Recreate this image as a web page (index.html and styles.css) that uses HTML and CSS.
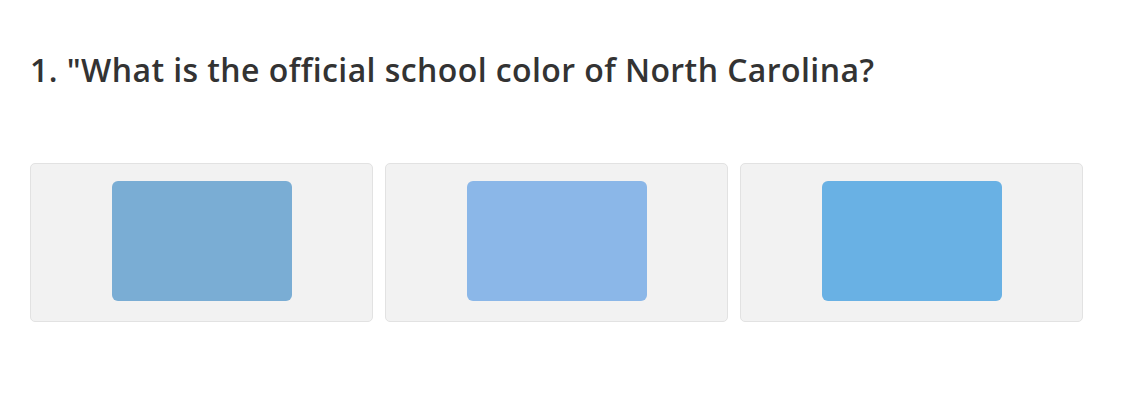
FILE: index.html
```html
<!DOCTYPE html>
<html>
<head>
<meta charset="utf-8">
<link rel="stylesheet" href="styles.css">
</head>
<body>
<div class="quiz">
  <h1 class="question">1. "What is the official school color of North Carolina?</h1>
  <div class="options">
    <div class="option"><div class="swatch swatch-a"></div></div>
    <div class="option"><div class="swatch swatch-b"></div></div>
    <div class="option"><div class="swatch swatch-c"></div></div>
  </div>
</div>
</body>
</html>
```
FILE: styles.css
```css
html, body {
  margin: 0;
  padding: 0;
  background: #ffffff;
}
.quiz {
  padding: 50px 0 0 30px;
  font-family: "Open Sans", "Liberation Sans", sans-serif;
}
.question {
  margin: 0;
  font-size: 32px;
  font-weight: 600;
  color: #333333;
  line-height: 40px;
  letter-spacing: 0.42px;
}
.options {
  display: flex;
  gap: 12px;
  margin-top: 73px;
}
.option {
  box-sizing: border-box;
  width: 343px;
  height: 159px;
  background: #f2f2f2;
  border: 1px solid #e2e2e2;
  border-radius: 5px;
  display: flex;
  justify-content: center;
  padding-top: 17px;
}
.swatch {
  width: 180px;
  height: 120px;
  border-radius: 6px;
}
.swatch-a { background: #7aadd4; }
.swatch-b { background: #8bb7e8; }
.swatch-c { background: #69b1e4; }
```
